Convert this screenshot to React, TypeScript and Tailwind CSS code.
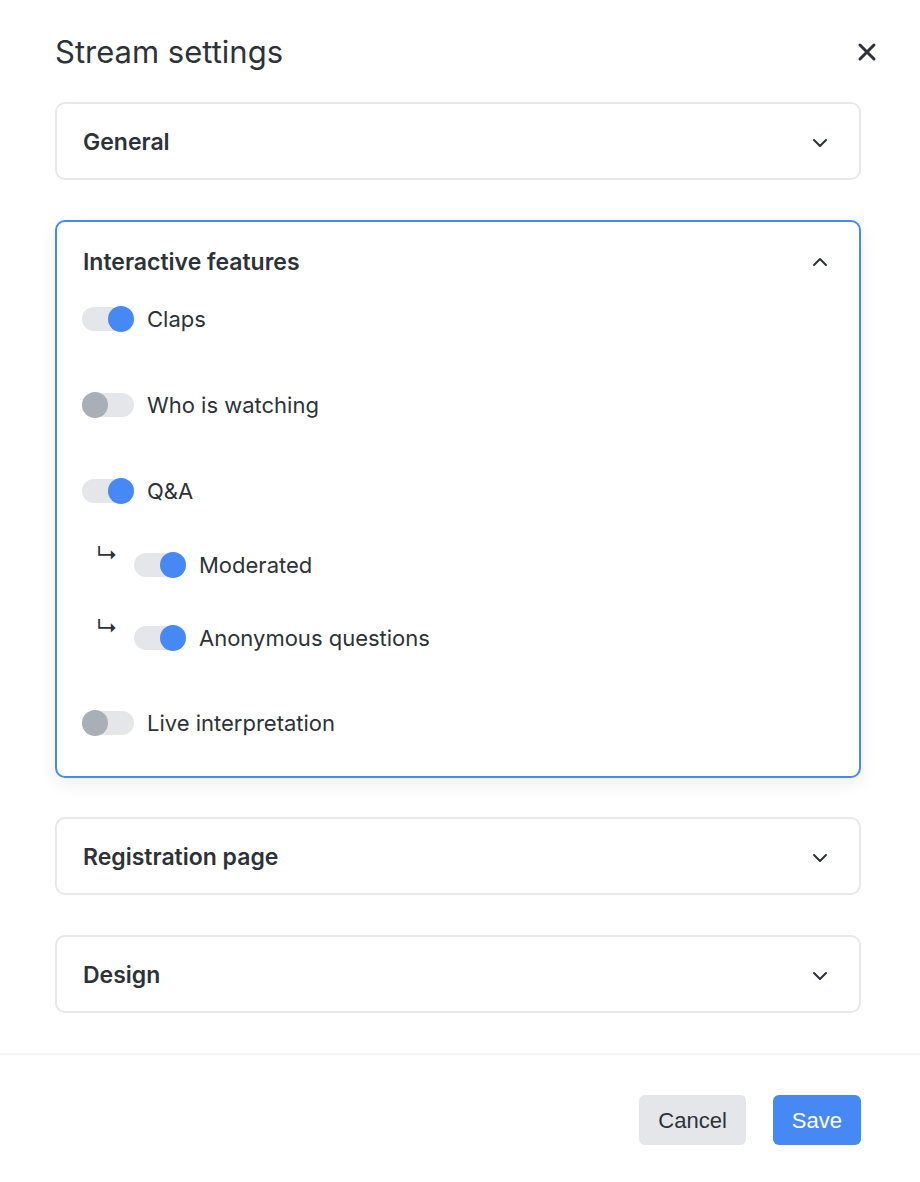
import React from "react";

const Chevron = ({ up }: { up?: boolean }) => (
  <svg width="16" height="10" viewBox="0 0 16 10" fill="none" className={up ? "rotate-180" : ""}>
    <path d="M2 2l6 6 6-6" stroke="#2d3239" strokeWidth="2" strokeLinecap="round" strokeLinejoin="round" />
  </svg>
);

const Toggle = ({ on }: { on: boolean }) => (
  <div className="relative w-[52px] h-[26px] flex items-center shrink-0">
    <div className="w-[52px] h-[24px] rounded-full bg-[#e4e6e9]" />
    {on ? (
      <div className="absolute right-0 top-0 w-[26px] h-[26px] rounded-full bg-[#4688f4]" />
    ) : (
      <div className="absolute left-0 top-0 w-[26px] h-[26px] rounded-full bg-[#a9afb7]" />
    )}
  </div>
);

const Row = ({ on, label, sub, className }: { on: boolean; label: string; sub?: boolean; className?: string }) => (
  <div className={"flex items-center h-[26px] " + (className || "")}>
    {sub && (
      <div className="w-[52px] h-[26px] relative shrink-0">
        <span className="absolute left-[14px] top-[-11px] text-[22px] text-[#2d3239] leading-[26px]">↳</span>
      </div>
    )}
    <Toggle on={on} />
    <span className="ml-[13px] text-[22px] text-[#2d3239] leading-none">{label}</span>
  </div>
);

const Card = ({ title }: { title: string }) => (
  <div className="border-2 border-[#e7e8ea] rounded-[10px] px-[26px] h-[78px] flex items-center justify-between">
    <span className="text-[23px] font-semibold text-[#2d3239] pt-[3px]">{title}</span>
    <span className="pr-[5px] pt-[3px]"><Chevron /></span>
  </div>
);

export default function App() {
  return (
    <div className="w-[920px] h-[1182px] bg-white flex flex-col" style={{ fontFamily: "Inter, 'Noto Sans', sans-serif" }}>
      <div className="pl-[55px] pr-[59px] pt-[34px]">
        <div className="h-[36px] flex items-center justify-between">
          <h1 className="text-[31px] text-[#2d3239] font-normal">Stream settings</h1>
          <svg width="20" height="20" viewBox="0 0 20 20" className="mr-[-16px]">
            <path d="M3 3l14 14M17 3L3 17" stroke="#2d3239" strokeWidth="3" strokeLinecap="round" />
          </svg>
        </div>
        <div className="mt-[32px] flex flex-col gap-[40px]">
          <Card title="General" />
          <div className="border-2 border-[#4688f4] rounded-[10px] pl-[25px] pr-[26px] shadow-[0_6px_18px_rgba(0,0,0,0.07)]">
            <div className="h-[74px] pl-[1px] flex items-center justify-between">
              <span className="text-[23px] font-semibold text-[#2d3239] pt-[6px]">Interactive features</span>
              <span className="pr-[5px] pt-[6px]"><Chevron up /></span>
            </div>
            <div className="pt-[10px] pb-[40px] flex flex-col">
              <Row on label="Claps" />
              <Row on={false} label="Who is watching" className="mt-[60px]" />
              <Row on label="Q&A" className="mt-[60px]" />
              <Row on sub label="Moderated" className="mt-[48px]" />
              <Row on sub label="Anonymous questions" className="mt-[47px]" />
              <Row on={false} label="Live interpretation" className="mt-[59px]" />
            </div>
          </div>
          <div className="-mt-[1px]"><Card title="Registration page" /></div>
          <Card title="Design" />
        </div>
      </div>
      <div className="mt-[40px] border-t-2 border-[#f3f4f5]" />
      <div className="pl-[58px] pr-[59px] pt-[40px] flex justify-end gap-[27px]" style={{ fontFamily: "'Liberation Sans', Arial, sans-serif" }}>
        <button className="h-[50px] px-[19px] rounded-[6px] bg-[#e4e6e9] text-[22px] text-[#2d3239]">Cancel</button>
        <button className="h-[50px] px-[19px] rounded-[6px] bg-[#4688f4] text-[22px] text-white">Save</button>
      </div>
    </div>
  );
}
